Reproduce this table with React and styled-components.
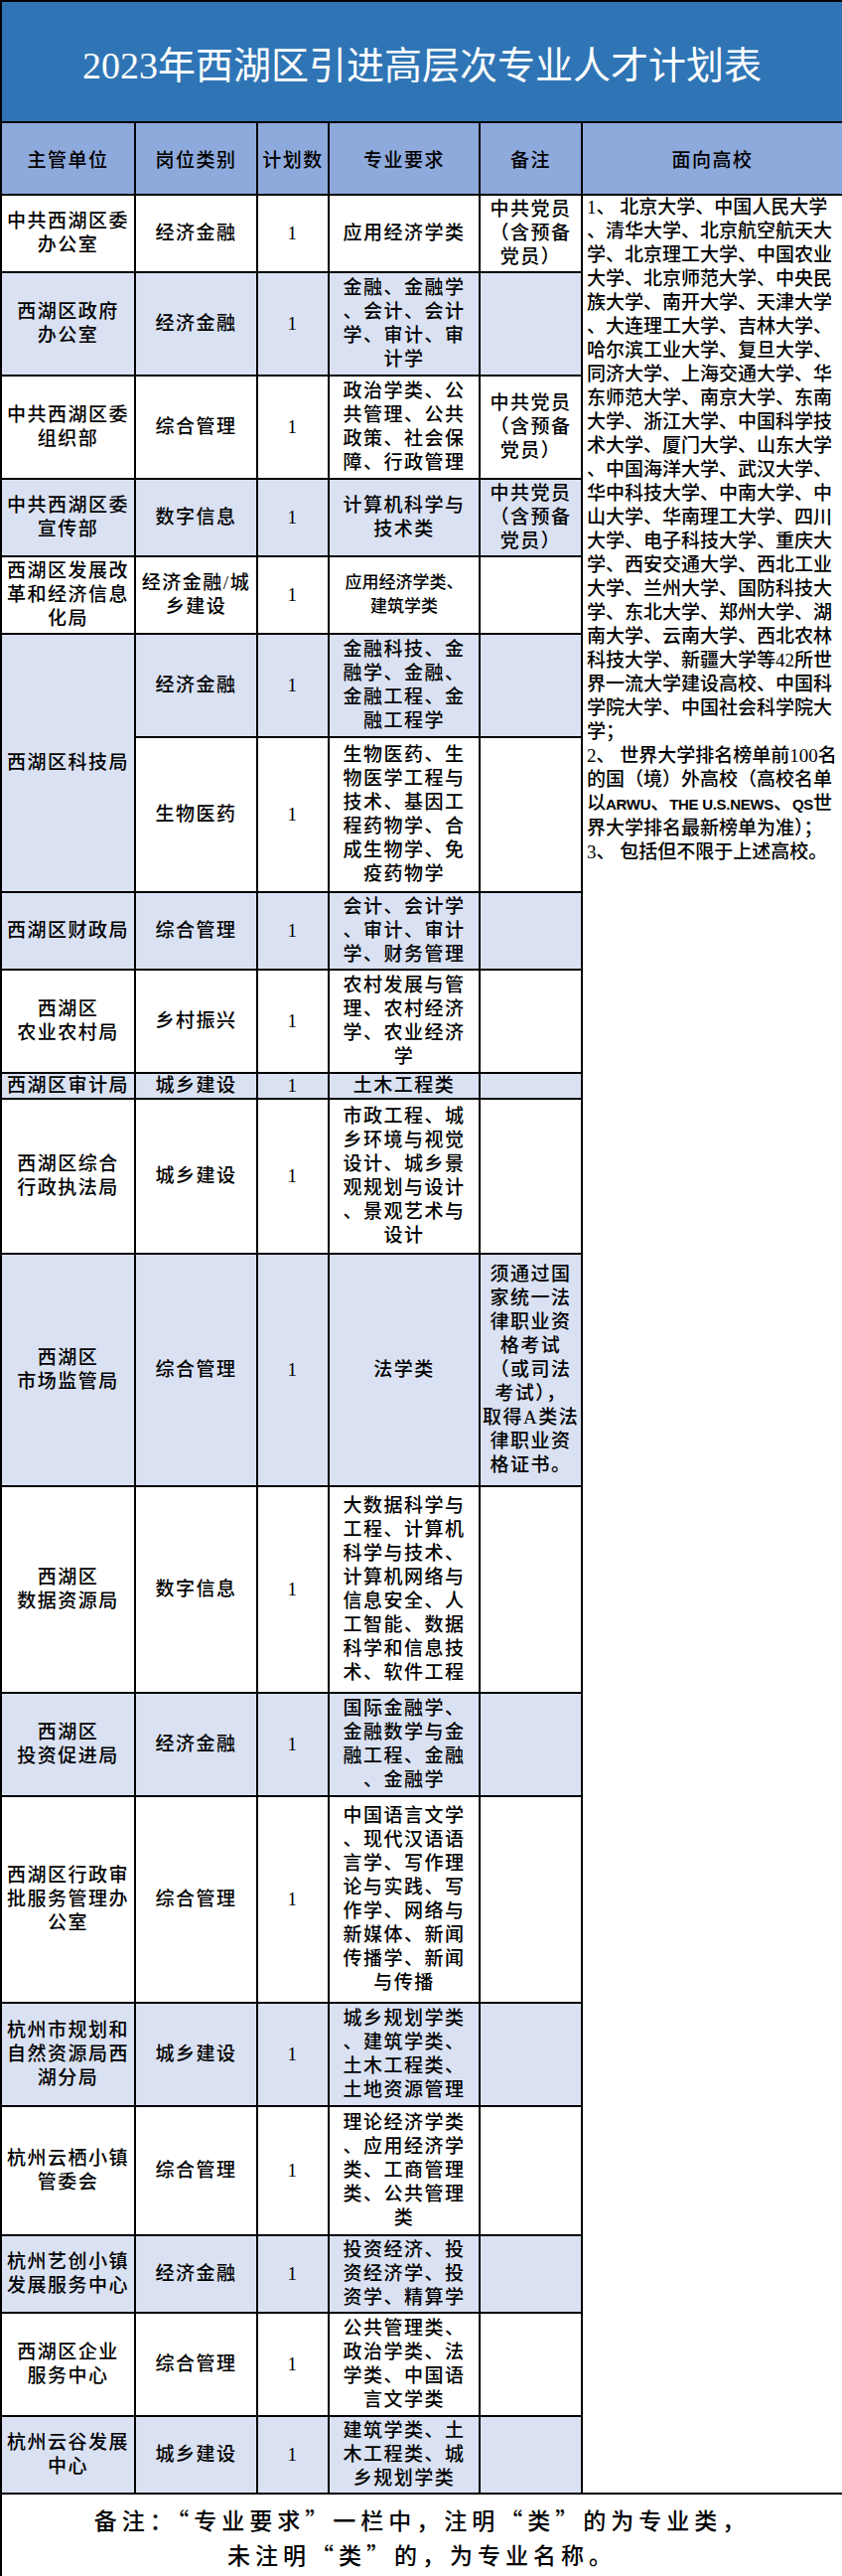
import React from 'react';
import styled, { createGlobalStyle } from 'styled-components';

const GlobalStyle = createGlobalStyle`
  body {
    margin: 0;
    background: #fff;
    font-family: "Liberation Serif", "Noto Sans CJK SC", serif;
  }
`;

const Table = styled.table`
  width: 848px;
  border-collapse: collapse;
  table-layout: fixed;
  color: #000;
  font-family: "Liberation Serif", "Noto Sans CJK SC", serif;
`;

const Col = styled.col`
  width: ${(p) => p.$w}px;
`;

const TitleCell = styled.th`
  height: 120px;
  padding: 0;
  border: 2px solid #000;
  background: #2f75b5;
  color: #fff;
  font-size: 38px;
  font-weight: 400;
  text-align: center;
  vertical-align: middle;
`;

const HeadRow = styled.tr`
  height: 73px;
`;

const HeadCell = styled.th`
  padding: 0;
  border: 2px solid #000;
  background: #8ea9db;
  font-size: 19px;
  font-weight: 500;
  letter-spacing: 1.5px;
  text-align: center;
  vertical-align: middle;
`;

const Row = styled.tr`
  height: ${(p) => p.$h}px;
`;

const Cell = styled.td`
  padding: 0 2px;
  border: 2px solid #000;
  background: ${(p) => (p.$shade ? '#d9e1f2' : '#fff')};
  font-size: ${(p) => (p.$small ? 17 : 19)}px;
  font-weight: 500;
  letter-spacing: ${(p) => (p.$small ? 0 : 1.5)}px;
  line-height: 24px;
  text-align: center;
  vertical-align: middle;
`;

const SchoolCell = styled.td`
  padding: 0 0 0 4px;
  border: 2px solid #000;
  background: #fff;
  font-size: 19px;
  font-weight: 500;
  line-height: 24px;
  text-align: left;
  vertical-align: top;
`;

const Latin = styled.span`
  font-family: "Liberation Sans Narrow", "Liberation Sans", sans-serif;
  font-size: 15px;
  font-weight: 700;
  letter-spacing: -0.3px;
`;

const FootCell = styled.td`
  height: 86px;
  padding: 0;
  border: 2px solid #000;
  font-family: "Noto Sans CJK SC", sans-serif;
  font-size: 23px;
  font-weight: 500;
  letter-spacing: 5px;
  line-height: 35px;
  text-align: center;
  vertical-align: middle;
`;

const Line = styled.span`
  display: block;
  white-space: nowrap;
`;

// full-width punctuation
const LP = '\uFF08';
const RP = '\uFF09';
const CM = '\uFF0C';
const SC = '\uFF1B';
const CL = '\uFF1A';

const columns = [135, 123, 72, 152, 103, 263];
const heads = ['主管单位', '岗位类别', '计划数', '专业要求', '备注', '面向高校'];

const party = ['中共党员', `${LP}含预备`, `党员${RP}`];

const rows = [
  { h: 78, unit: ['中共西湖区委', '办公室'], cat: ['经济金融'], major: ['应用经济学类'], note: party },
  { h: 104, shade: true, unit: ['西湖区政府', '办公室'], cat: ['经济金融'], major: ['金融、金融学', '、会计、会计', '学、审计、审', '计学'] },
  { h: 104, unit: ['中共西湖区委', '组织部'], cat: ['综合管理'], major: ['政治学类、公', '共管理、公共', '政策、社会保', '障、行政管理'], note: party },
  { h: 78, shade: true, unit: ['中共西湖区委', '宣传部'], cat: ['数字信息'], major: ['计算机科学与', '技术类'], note: party },
  { h: 78, unit: ['西湖区发展改', '革和经济信息', '化局'], cat: ['经济金融/城', '乡建设'], major: ['应用经济学类、', '建筑学类'], small: true },
  { h: 104, shade: true, unit: ['西湖区科技局'], unitSpan: 2, cat: ['经济金融'], major: ['金融科技、金', '融学、金融、', '金融工程、金', '融工程学'] },
  { h: 156, unit: null, cat: ['生物医药'], major: ['生物医药、生', '物医学工程与', '技术、基因工', '程药物学、合', '成生物学、免', '疫药物学'] },
  { h: 78, shade: true, unit: ['西湖区财政局'], cat: ['综合管理'], major: ['会计、会计学', '、审计、审计', '学、财务管理'] },
  { h: 104, unit: ['西湖区', '农业农村局'], cat: ['乡村振兴'], major: ['农村发展与管', '理、农村经济', '学、农业经济', '学'] },
  { h: 26, shade: true, unit: ['西湖区审计局'], cat: ['城乡建设'], major: ['土木工程类'] },
  { h: 156, unit: ['西湖区综合', '行政执法局'], cat: ['城乡建设'], major: ['市政工程、城', '乡环境与视觉', '设计、城乡景', '观规划与设计', '、景观艺术与', '设计'] },
  { h: 234, shade: true, unit: ['西湖区', '市场监管局'], cat: ['综合管理'], major: ['法学类'], note: ['须通过国', '家统一法', '律职业资', '格考试', `${LP}或司法`, `考试${RP}${CM}`, '取得A类法', '律职业资', '格证书。'] },
  { h: 208, unit: ['西湖区', '数据资源局'], cat: ['数字信息'], major: ['大数据科学与', '工程、计算机', '科学与技术、', '计算机网络与', '信息安全、人', '工智能、数据', '科学和信息技', '术、软件工程'] },
  { h: 104, shade: true, unit: ['西湖区', '投资促进局'], cat: ['经济金融'], major: ['国际金融学、', '金融数学与金', '融工程、金融', '、金融学'] },
  { h: 208, unit: ['西湖区行政审', '批服务管理办', '公室'], cat: ['综合管理'], major: ['中国语言文学', '、现代汉语语', '言学、写作理', '论与实践、写', '作学、网络与', '新媒体、新闻', '传播学、新闻', '与传播'] },
  { h: 104, shade: true, unit: ['杭州市规划和', '自然资源局西', '湖分局'], cat: ['城乡建设'], major: ['城乡规划学类', '、建筑学类、', '土木工程类、', '土地资源管理'] },
  { h: 130, unit: ['杭州云栖小镇', '管委会'], cat: ['综合管理'], major: ['理论经济学类', '、应用经济学', '类、工商管理', '类、公共管理', '类'] },
  { h: 78, shade: true, unit: ['杭州艺创小镇', '发展服务中心'], cat: ['经济金融'], major: ['投资经济、投', '资经济学、投', '资学、精算学'] },
  { h: 104, unit: ['西湖区企业', '服务中心'], cat: ['综合管理'], major: ['公共管理类、', '政治学类、法', '学类、中国语', '言文学类'] },
  { h: 78, shade: true, unit: ['杭州云谷发展', '中心'], cat: ['城乡建设'], major: ['建筑学类、土', '木工程类、城', '乡规划学类'] },
];

const schools = [
  '1、 北京大学、中国人民大学',
  '、清华大学、北京航空航天大',
  '学、北京理工大学、中国农业',
  '大学、北京师范大学、中央民',
  '族大学、南开大学、天津大学',
  '、大连理工大学、吉林大学、',
  '哈尔滨工业大学、复旦大学、',
  '同济大学、上海交通大学、华',
  '东师范大学、南京大学、东南',
  '大学、浙江大学、中国科学技',
  '术大学、厦门大学、山东大学',
  '、中国海洋大学、武汉大学、',
  '华中科技大学、中南大学、中',
  '山大学、华南理工大学、四川',
  '大学、电子科技大学、重庆大',
  '学、西安交通大学、西北工业',
  '大学、兰州大学、国防科技大',
  '学、东北大学、郑州大学、湖',
  '南大学、云南大学、西北农林',
  '科技大学、新疆大学等42所世',
  '界一流大学建设高校、中国科',
  '学院大学、中国社会科学院大',
  `学${SC}`,
  '2、 世界大学排名榜单前100名',
  `的国${LP}境${RP}外高校${LP}高校名单`,
  <>以<Latin>ARWU</Latin>、<Latin>THE U.S.NEWS</Latin>、<Latin>QS</Latin>世</>,
  `界大学排名最新榜单为准${RP}${SC}`,
  '3、 包括但不限于上述高校。',
];

const Lines = ({ items }) => (items || []).map((t, i) => <Line key={i}>{t}</Line>);

export default function App() {
  return (
    <>
      <GlobalStyle />
      <Table>
        <colgroup>
          {columns.map((w, i) => (
            <Col key={i} $w={w} />
          ))}
        </colgroup>
        <thead>
          <tr>
            <TitleCell colSpan={6}>2023年西湖区引进高层次专业人才计划表</TitleCell>
          </tr>
          <HeadRow>
            {heads.map((h) => (
              <HeadCell key={h}>{h}</HeadCell>
            ))}
          </HeadRow>
        </thead>
        <tbody>
          {rows.map((r, i) => (
            <Row key={i} $h={r.h}>
              {r.unit && (
                <Cell $shade={r.shade} rowSpan={r.unitSpan || 1}>
                  <Lines items={r.unit} />
                </Cell>
              )}
              <Cell $shade={r.shade}>
                <Lines items={r.cat} />
              </Cell>
              <Cell $shade={r.shade}>1</Cell>
              <Cell $shade={r.shade} $small={r.small}>
                <Lines items={r.major} />
              </Cell>
              <Cell $shade={r.shade}>
                <Lines items={r.note} />
              </Cell>
              {i === 0 && (
                <SchoolCell rowSpan={rows.length}>
                  <Lines items={schools} />
                </SchoolCell>
              )}
            </Row>
          ))}
          <tr>
            <FootCell colSpan={6}>
              <Line>{`备注${CL}“专业要求”一栏中${CM}注明“类”的为专业类${CM}`}</Line>
              <Line>{`未注明“类”的${CM}为专业名称。`}</Line>
            </FootCell>
          </tr>
        </tbody>
      </Table>
    </>
  );
}
